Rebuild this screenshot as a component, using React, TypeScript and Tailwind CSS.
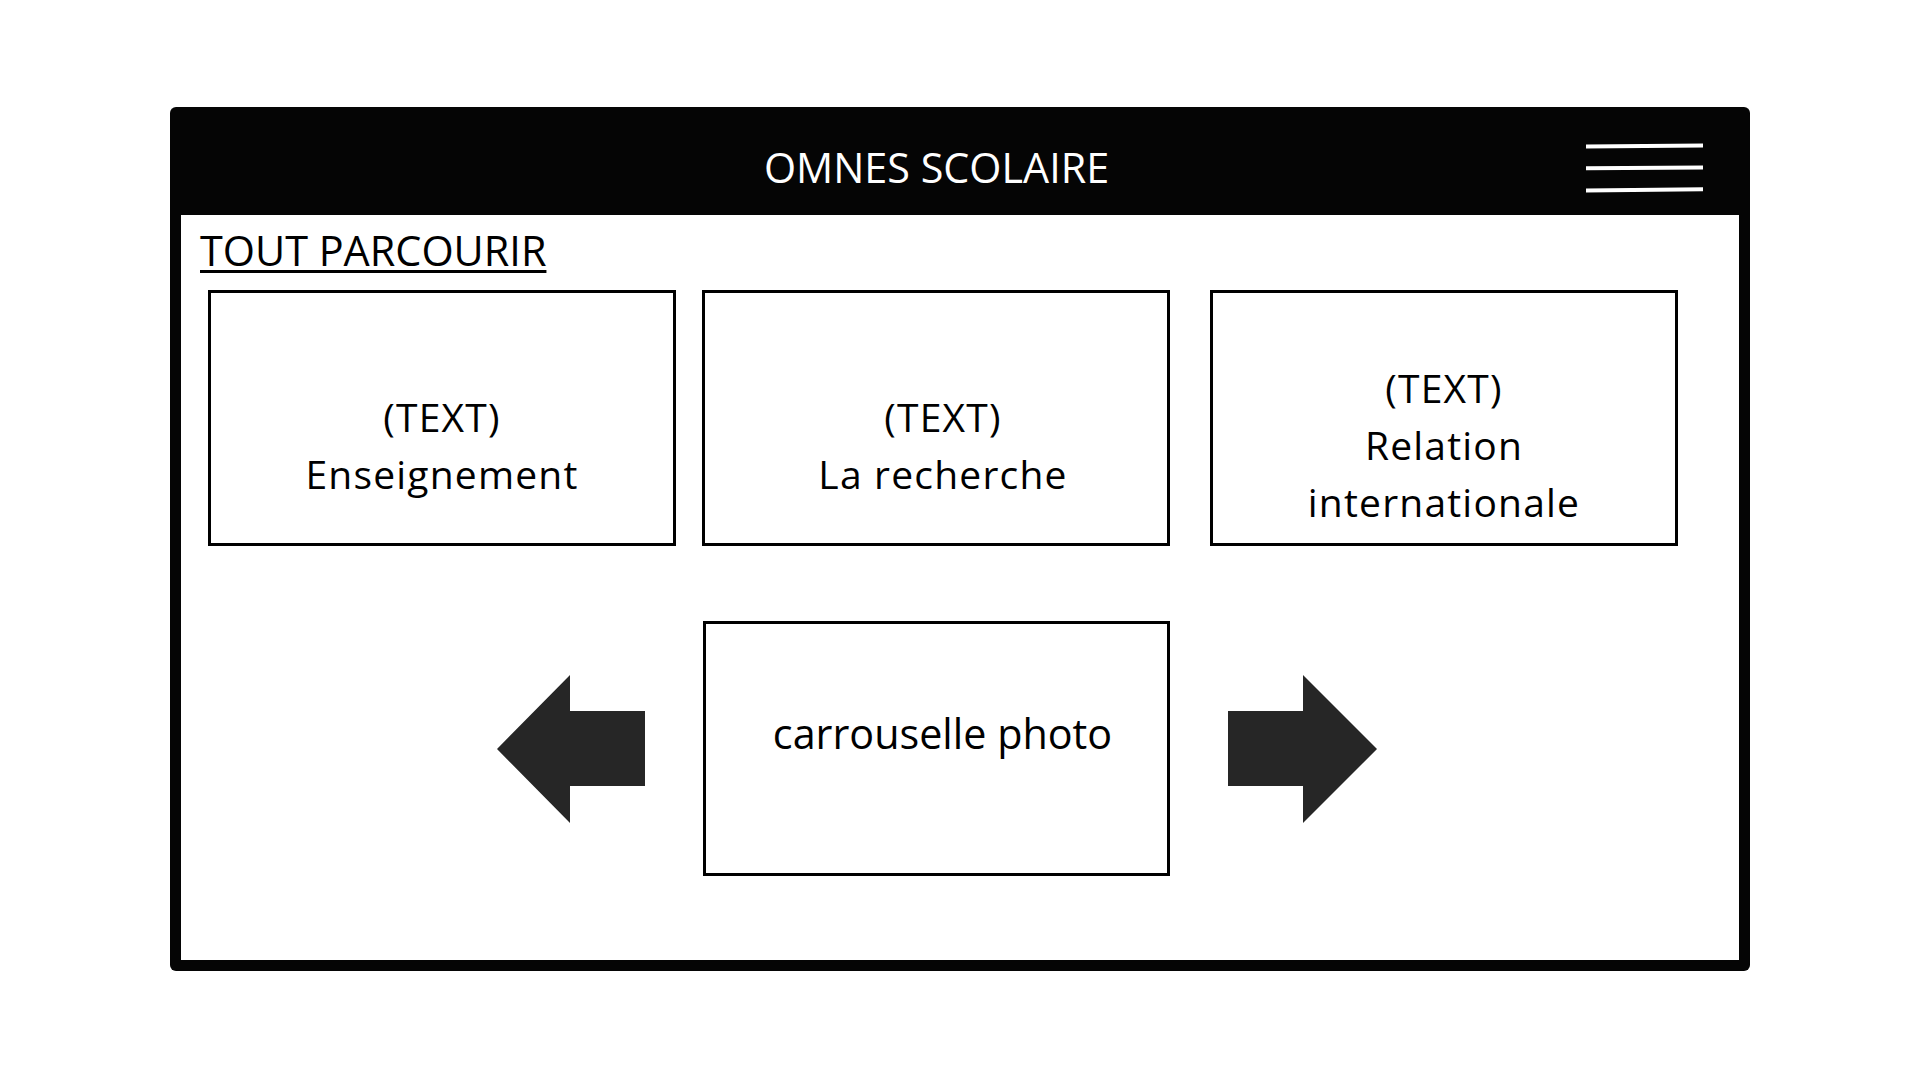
import React from "react";

function Hamburger() {
  return (
    <svg width="118" height="52" viewBox="0 0 118 52" className="block">
      <line x1="0" y1="3.5" x2="117" y2="2.5" stroke="#ffffff" strokeWidth="4" />
      <line x1="0" y1="25.3" x2="117" y2="24.5" stroke="#ffffff" strokeWidth="4" />
      <line x1="0" y1="47.5" x2="117" y2="46.2" stroke="#ffffff" strokeWidth="4" />
    </svg>
  );
}

function LeftArrow() {
  return (
    <svg width="148" height="148" viewBox="0 0 148 148" className="block shrink-0">
      <polygon points="0,74 73,0 73,36 148,36 148,111 73,111 73,148" fill="#262626" />
    </svg>
  );
}

function RightArrow() {
  return (
    <svg width="149" height="148" viewBox="0 0 149 148" className="block shrink-0">
      <polygon points="0,36 75,36 75,0 149,74 75,148 75,111 0,111" fill="#262626" />
    </svg>
  );
}

function Card({ lines, extra }: { lines: string[]; extra?: string }) {
  return (
    <div
      className={
        "w-[468px] h-[256px] shrink-0 border-[3px] border-black flex flex-col items-center justify-center pt-[53px] text-center text-[39px] tracking-[1.2px] leading-[57px] text-black " +
        (extra ?? "")
      }
    >
      {lines.map((l) => (
        <div key={l}>{l}</div>
      ))}
    </div>
  );
}

export default function App() {
  return (
    <div
      className="w-[1920px] h-[1080px] bg-white overflow-hidden"
      style={{ fontFamily: '"Open Sans", "Noto Sans", sans-serif' }}
    >
      <div className="ml-[170px] mt-[107px] inline-flex flex-col w-[1580px] h-[864px] rounded-[6px] bg-[#050505] px-[11px] pb-[11px] align-top">
        {/* header */}
        <div className="h-[108px] shrink-0 flex items-start">
          <div className="ml-[583px] mt-[40px] text-[41.3px] leading-[40px] text-white whitespace-nowrap">
            OMNES SCOLAIRE
          </div>
          <div className="ml-auto mr-[35px] mt-[36px]">
            <Hamburger />
          </div>
        </div>
        {/* body */}
        <div className="flex-1 bg-white flex flex-col">
          <div className="pl-[19px] pt-[14px] text-[41.4px] leading-[42px] text-black">
            <span className="underline decoration-[3px] underline-offset-[4px]">TOUT PARCOURIR</span>
          </div>
          <div className="mt-[19px] ml-[27px] flex">
            <Card lines={["(TEXT)", "Enseignement"]} />
            <Card lines={["(TEXT)", "La recherche"]} extra="ml-[26px] pl-[14px]" />
            <Card lines={["(TEXT)", "Relation", "internationale"]} extra="ml-[40px]" />
          </div>
          <div className="mt-[75px] ml-[316px] flex items-center">
            <LeftArrow />
            <div className="ml-[58px] w-[467px] h-[255px] shrink-0 border-[3px] border-black flex justify-center pl-[12px] pt-[79px] text-[41.3px] leading-[60px] text-black">
              carrouselle photo
            </div>
            <div className="ml-[58px]">
              <RightArrow />
            </div>
          </div>
        </div>
      </div>
    </div>
  );
}
